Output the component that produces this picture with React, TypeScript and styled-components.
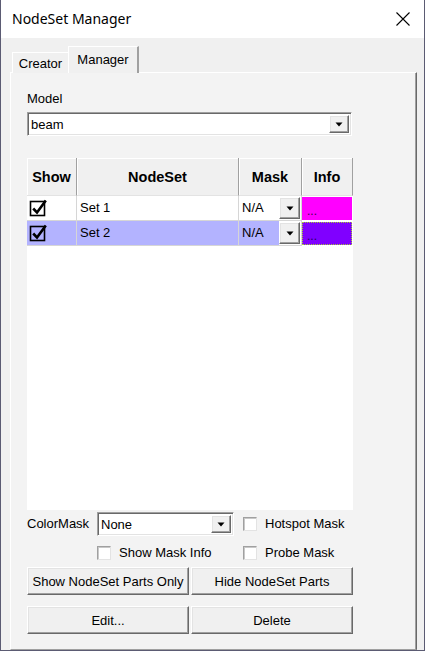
import React from "react";
import styled, { createGlobalStyle, css } from "styled-components";

const GlobalStyle = createGlobalStyle`
  html, body { margin: 0; padding: 0; background: #f0f0f0; }
  body { font-family: "Liberation Sans", Arial, sans-serif; font-size: 13px; color: #000; }
  * { box-sizing: border-box; }
`;

const raised = css`
  border-style: solid;
  border-width: 1px;
  border-color: #ffffff #696969 #696969 #ffffff;
  box-shadow: inset -1px -1px 0 #a0a0a0, inset 1px 1px 0 #e3e3e3;
  background: #f0f0f0;
`;

const sunken = css`
  border-style: solid;
  border-width: 1px;
  border-color: #a0a0a0 #ffffff #ffffff #a0a0a0;
  box-shadow: inset 1px 1px 0 #696969, inset -1px -1px 0 #e3e3e3;
  background: #ffffff;
`;

const Window = styled.div`
  width: 425px;
  height: 651px;
  display: flex;
  flex-direction: column;
  background: #f0f0f0;
  border-left: 1px solid #5b5b73;
  border-right: 1px solid #5b5b73;
  border-bottom: 1px solid #5b5b73;
`;

const TitleBar = styled.div`
  height: 38px;
  flex: none;
  display: flex;
  align-items: center;
  justify-content: space-between;
  padding: 0 13px 0 11px;
  background: #ffffff;
`;

const Title = styled.div`
  font-family: "Noto Sans", "Open Sans", sans-serif;
  font-size: 14px;
  color: #000;
  margin-top: -1px;
`;

const CloseIcon = () => (
  <svg width="16" height="16" viewBox="0 0 16 16">
    <path d="M1.5 1.5 L14.5 14.5 M14.5 1.5 L1.5 14.5" stroke="#000" strokeWidth="1.1" fill="none" />
  </svg>
);

const Body = styled.div`
  flex: 1;
  display: flex;
  flex-direction: column;
  padding: 9px 7px 0 9px;
`;

const TabStrip = styled.div`
  display: flex;
  align-items: flex-end;
  height: 26px;
  padding-left: 2px;
  position: relative;
  z-index: 1;
  margin-bottom: -1px;
`;

const Tab = styled.div<{ $active?: boolean }>`
  display: flex;
  align-items: center;
  justify-content: center;
  background: #f0f0f0;
  border-style: solid;
  border-color: #ffffff #696969 transparent #ffffff;
  border-width: 1px 1px 0 1px;
  ${(p) =>
    p.$active
      ? css`
          height: 27px;
          width: 71px;
          padding-bottom: 1px;
          border-right-width: 2px;
          border-right-color: #a0a0a0;
        `
      : css`
          height: 21px;
          width: 56px;
          padding-top: 1px;
          border-right: none;
        `}
`;

const Panel = styled.div`
  flex: 1;
  display: flex;
  flex-direction: column;
  background: #f3f3f3;
  border-style: solid;
  border-width: 1px;
  border-color: #ffffff #696969 #a0a0a0 #ffffff;
  box-shadow: inset -1px 0 0 #a0a0a0;
  padding: 18px 0 0 16px;
`;

const Label = styled.div<{ $gap?: number }>`
  line-height: 16px;
  height: 16px;
  white-space: nowrap;
  margin-bottom: ${(p) => p.$gap ?? 0}px;
`;

const Combo = styled.div<{ $width: number }>`
  ${sunken};
  width: ${(p) => p.$width}px;
  height: 24px;
  display: flex;
  align-items: center;
  justify-content: space-between;
  padding: 2px 2px 2px 3px;
`;

const ComboText = styled.span`
  line-height: 16px;
  padding-top: 1px;
`;

const ArrowButton = styled.div`
  ${raised};
  width: 20px;
  height: 100%;
  display: flex;
  align-items: center;
  justify-content: center;
  flex: none;
`;

const Arrow = () => (
  <svg width="8" height="5" viewBox="0 0 8 5">
    <path d="M0.5 0.5 H7.5 L4 4.5 Z" fill="#000" />
  </svg>
);

const Grid = styled.div`
  margin-top: 22px;
  width: 326px;
  height: 352px;
  background: #ffffff;
  display: grid;
  grid-template-columns: 50px 162px 63px 51px;
  grid-auto-rows: 25px;
  grid-template-rows: 38px;
  align-content: start;
`;

const HeaderCell = styled.div`
  display: flex;
  align-items: center;
  justify-content: center;
  font-weight: bold;
  font-size: 14.5px;
  background: #f0f0f0;
  border-right: 1px solid #a0a0a0;
  border-bottom: 1px solid #e3e3e3;
  box-shadow: inset 1px 1px 0 #ffffff;
  padding-top: 1px;
`;

const Cell = styled.div<{ $sel?: boolean }>`
  display: flex;
  align-items: center;
  background: ${(p) => (p.$sel ? "#b3b3ff" : "#ffffff")};
  border-right: 1px solid #d6d6d6;
  border-bottom: 1px solid #d6d6d6;
  padding-left: 3px;
  line-height: 16px;
`;

const CheckCell = styled(Cell)`
  padding-left: 2px;
`;

const MaskCell = styled(Cell)`
  padding: 1px 1px 1px 3px;
  justify-content: space-between;
  background: ${(p) => (p.$sel ? "linear-gradient(to right, #b3b3ff 0 40px, #ffffff 40px)" : "#ffffff")};
`;

const MaskButton = styled.div`
  ${raised};
  width: 21px;
  height: 22px;
  display: flex;
  align-items: center;
  justify-content: center;
`;

const InfoCell = styled.div<{ $color: string; $focus?: boolean }>`
  background: ${(p) => p.$color};
  margin: 1px 1px 1px 0;
  display: flex;
  align-items: center;
  padding: 4px 0 0 5px;
  font-size: 12px;
  line-height: 12px;
  color: #3c0050;
  ${(p) =>
    p.$focus &&
    css`
      outline: 1px dotted #a8d030;
      outline-offset: -1px;
      color: #20005a;
    `}
`;

const GridCheck = () => (
  <svg width="20" height="20" viewBox="0 0 20 20">
    <rect x="1.5" y="3.5" width="14" height="14" fill="none" stroke="#000" strokeWidth="1.6" />
    <path d="M4.2 10.5 L8 14.4 L16.8 2.4" fill="none" stroke="#000" strokeWidth="2.6" />
  </svg>
);

const Controls = styled.div`
  margin-top: 2px;
  width: 326px;
  display: grid;
  grid-template-columns: 70px 146px 1fr;
  grid-template-rows: 24px 17px;
  row-gap: 8px;
  align-items: center;
`;

const CheckRow = styled.label`
  display: flex;
  align-items: center;
  gap: 8px;
  line-height: 16px;
  white-space: nowrap;
`;

const CheckBox = styled.span`
  width: 14px;
  height: 14px;
  flex: none;
  background: #fff;
  border-style: solid;
  border-width: 1px;
  border-color: #a0a0a0 #e3e3e3 #e3e3e3 #a0a0a0;
  box-shadow: inset 1px 1px 0 #c8c8c8;
`;

const ButtonGrid = styled.div`
  margin-top: 6px;
  width: 326px;
  display: grid;
  grid-template-columns: 162px 162px;
  column-gap: 2px;
  row-gap: 11px;
`;

const Button = styled.button`
  ${raised};
  height: 28px;
  font-family: "Liberation Sans", Arial, sans-serif;
  font-size: 13px;
  color: #000;
  padding: 0;
  display: flex;
  align-items: center;
  justify-content: center;
`;

const rows = [
  { name: "Set 1", color: "#ff00ff", sel: false },
  { name: "Set 2", color: "#8000ff", sel: true },
];

export default function App() {
  return (
    <>
      <GlobalStyle />
      <Window>
        <TitleBar>
          <Title>NodeSet Manager</Title>
          <CloseIcon />
        </TitleBar>
        <Body>
          <TabStrip>
            <Tab>Creator</Tab>
            <Tab $active>Manager</Tab>
          </TabStrip>
          <Panel>
            <Label $gap={5}>Model</Label>
            <Combo $width={325}>
              <ComboText>beam</ComboText>
              <ArrowButton>
                <Arrow />
              </ArrowButton>
            </Combo>
            <Grid>
              <HeaderCell>Show</HeaderCell>
              <HeaderCell>NodeSet</HeaderCell>
              <HeaderCell>Mask</HeaderCell>
              <HeaderCell>Info</HeaderCell>
              {rows.map((r) => (
                <React.Fragment key={r.name}>
                  <CheckCell $sel={r.sel}>
                    <GridCheck />
                  </CheckCell>
                  <Cell $sel={r.sel}>{r.name}</Cell>
                  <MaskCell $sel={r.sel}>
                    <span>N/A</span>
                    <MaskButton>
                      <Arrow />
                    </MaskButton>
                  </MaskCell>
                  <InfoCell $color={r.color} $focus={r.sel}>
                    ...
                  </InfoCell>
                </React.Fragment>
              ))}
            </Grid>
            <Controls>
              <Label>ColorMask</Label>
              <Combo $width={137}>
                <ComboText>None</ComboText>
                <ArrowButton>
                  <Arrow />
                </ArrowButton>
              </Combo>
              <CheckRow>
                <CheckBox />
                Hotspot Mask
              </CheckRow>
              <span />
              <CheckRow>
                <CheckBox />
                Show Mask Info
              </CheckRow>
              <CheckRow>
                <CheckBox />
                Probe Mask
              </CheckRow>
            </Controls>
            <ButtonGrid>
              <Button>Show NodeSet Parts Only</Button>
              <Button>Hide NodeSet Parts</Button>
              <Button>Edit...</Button>
              <Button>Delete</Button>
            </ButtonGrid>
          </Panel>
        </Body>
      </Window>
    </>
  );
}
